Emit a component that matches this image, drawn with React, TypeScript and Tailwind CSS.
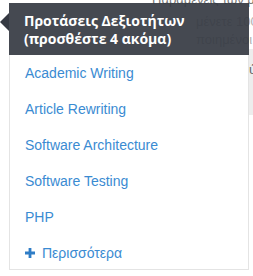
export default function App() {
  const skills = [
    "Academic Writing",
    "Article Rewriting",
    "Software Architecture",
    "Software Testing",
    "PHP",
  ];

  return (
    <div className="relative w-[253px] h-[276px] overflow-hidden bg-white font-['Liberation_Sans',Arial,sans-serif]">
      {/* page behind the popover */}
      <div className="flex flex-col pl-[152px] -mt-[9px] text-[13px] leading-[18px] whitespace-nowrap">
        <div className="text-[#777]">Παραμένεις των μετ</div>
        <div className="pl-[44px] pt-[4px] text-[#b0b0b0]">μένετε 100%</div>
        <div className="pl-[44px] text-[#b0b0b0]">ποιημένοι</div>
        <div className="ml-[97px] w-[4px] h-[66px] bg-[#ededed] text-[#666] pt-[12px]">ύ</div>
      </div>

      {/* popover */}
      <div className="absolute left-0 top-[3px] z-10 flex">
        <div className="w-[9px] shrink-0">
          <div className="mt-[10px] w-0 h-0 border-y-[9px] border-y-transparent border-r-[9px] border-r-[#353942]" />
        </div>
        <div className="w-[240px]">
          <div className="bg-[#353942]/[0.92] pl-[15px] pt-[9px] pb-[6px] h-[52px] font-['Open_Sans',sans-serif] font-bold text-[14px] leading-[18px] text-white">
            <div>Προτάσεις Δεξιοτήτων</div>
            <div>(προσθέστε 4 ακόμα)</div>
          </div>
          <ul className="border border-t-0 border-[#e4e4e4] bg-white">
            {skills.map((s) => (
              <li
                key={s}
                className="h-[36px] flex items-center pl-[15px] text-[14px] text-[#3a8bd2]"
              >
                {s}
              </li>
            ))}
            <li className="h-[34px] flex items-center gap-[7px] pl-[15px] pt-[2px] text-[14px] text-[#3a8bd2]">
              <svg width="10" height="10" viewBox="0 0 10 10">
                <path d="M3.6 0h2.8v3.6H10v2.8H6.4V10H3.6V6.4H0V3.6h3.6z" fill="#2f7dc6" />
              </svg>
              Περισσότερα
            </li>
          </ul>
        </div>
      </div>
    </div>
  );
}
